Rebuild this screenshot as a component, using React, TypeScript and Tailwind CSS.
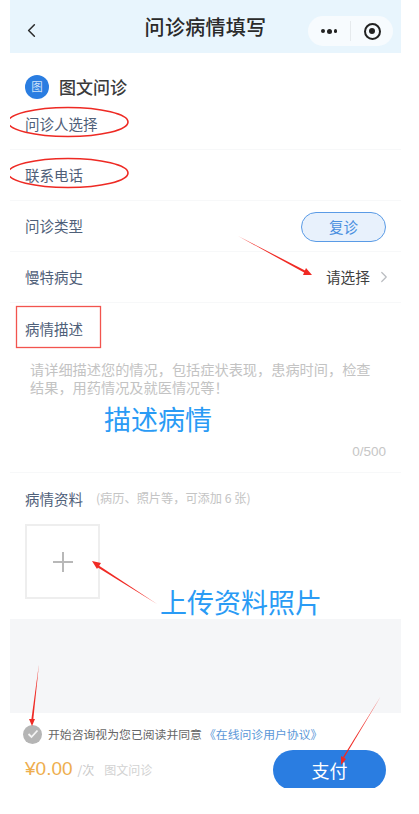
import React from 'react';
import { ChevronLeft, ChevronRight } from 'lucide-react';

const cjk = { fontFamily: '"Noto Sans CJK SC", "Noto Sans", sans-serif' };

const Row = ({ label, children, divider = true }: { label: string; children?: React.ReactNode; divider?: boolean }) => (
  <div className={`flex items-center justify-between h-[51px] pl-[15px] pr-[15px] ${divider ? 'border-b border-[#f7f8f9]' : ''}`}>
    <span className="text-[14.5px] text-[#4f6079]">{label}</span>
    {children}
  </div>
);

// red marks and arrows drawn on top of the screenshot
const Annotations = () => (
  <svg className="absolute inset-0 pointer-events-none" width="419" height="814" viewBox="0 0 419 814" fill="none">
    <defs>
      <clipPath id="page">
        <rect x="10" y="0" width="391" height="788" />
      </clipPath>
    </defs>
    <g clipPath="url(#page)">
      <ellipse cx="68" cy="122" rx="60" ry="14.5" stroke="#ee2a24" strokeWidth="1.6" />
      <ellipse cx="68" cy="173" rx="60" ry="14.5" stroke="#ee2a24" strokeWidth="1.6" />
    </g>
    <rect x="16.5" y="306.5" width="84" height="41" stroke="#f2544e" strokeWidth="1.3" />
    <polygon points="238,236 306,271 305,273" fill="#f02a24" />
    <polygon points="312,275 303,275 306,268" fill="#f02a24" />
    <polygon points="157,604 97,567 98,565" fill="#f02a24" />
    <polygon points="92,561 101,563 97,569" fill="#f02a24" />
    <polygon points="39,664 33,722 31,722" fill="#f02a24" />
    <polygon points="32,726 29,719 35,719" fill="#f02a24" />
    <polygon points="381,696 344,758 343,757" fill="#f02a24" />
    <polygon points="341,765 341,756 346,759" fill="#f02a24" />
  </svg>
);

export default function App() {
  return (
    <div className="relative w-[419px] h-[814px] bg-white overflow-hidden" style={cjk}>
      <div className="ml-[10px] w-[391px] h-[788px] flex flex-col">
        {/* Nav bar */}
        <div className="relative flex items-center justify-center h-[53px] bg-[#e8f5fd] shrink-0">
          <ChevronLeft className="absolute left-[10px] top-[19px] text-[#2b2b2b]" size={23} strokeWidth={1.6} />
          <span className="text-[20px] font-medium text-[#2a2a2a] tracking-[0.3px]">问诊病情填写</span>
          <div className="absolute right-[8px] top-[16px] w-[85px] h-[30px] rounded-full bg-[#f7fbfe] flex items-center">
            <div className="flex-1 flex items-center justify-center gap-[2px]">
              <span className="w-[3.5px] h-[3.5px] rounded-full bg-[#222]" />
              <span className="w-[5px] h-[5px] rounded-full bg-[#222]" />
              <span className="w-[3.5px] h-[3.5px] rounded-full bg-[#222]" />
            </div>
            <div className="w-px h-[20px] bg-[#e6eaed]" />
            <div className="flex-1 flex items-center justify-center">
              <div className="w-[17px] h-[17px] rounded-full border-2 border-[#222] flex items-center justify-center">
                <span className="w-[6px] h-[6px] rounded-full bg-[#222]" />
              </div>
            </div>
          </div>
        </div>

        {/* Title */}
        <div className="flex items-center gap-[10px] pl-[15px] pt-[21px] h-[47px] shrink-0">
          <span className="w-[24px] h-[24px] rounded-full bg-[#2a7de1] text-[#cfe3fa] text-[11.5px] flex items-center justify-center">图</span>
          <span className="text-[17px] font-medium text-[#3a3a3a]">图文问诊</span>
        </div>

        <div className="flex flex-col shrink-0 -mt-[1px]">
          <Row label="问诊人选择" />
          <Row label="联系电话" />
          <Row label="问诊类型">
            <span className="w-[85px] h-[30px] mt-[1px] rounded-full border border-[#5a9be6] bg-[#e8f1fc] text-[#4a8fdf] text-[14.5px] flex items-center justify-center">复诊</span>
          </Row>
          <Row label="慢特病史">
            <span className="flex items-center gap-[5px] text-[14.7px] text-[#3f3f3f]">
              请选择
              <ChevronRight className="text-[#b9bcc0] -mr-[7px]" size={18} strokeWidth={1.6} />
            </span>
          </Row>
          <Row label="病情描述" divider={false} />
        </div>

        {/* Description */}
        <div className="flex flex-col h-[119px] pl-[20px] pr-[26px] pt-[6px] border-b border-[#f7f8f9] shrink-0">
          <p className="text-[14.2px] leading-[18px] text-[#c3c3c3]">请详细描述您的情况，包括症状表现，患病时间，检查结果，用药情况及就医情况等！</p>
          <span className="mt-auto mb-[10px] -mr-[11px] self-end text-[13.5px] text-[#c6c6c6]" style={{ fontFamily: '"Liberation Sans", sans-serif' }}>0/500</span>
        </div>

        {/* Upload */}
        <div className="flex flex-col h-[146px] pl-[15px] shrink-0">
          <div className="flex items-center h-[51px] gap-[13px]">
            <span className="text-[14.5px] text-[#4f6079]">病情资料</span>
            <span className="text-[12.2px] text-[#c4c4c4]">(病历、照片等，可添加 6 张)</span>
          </div>
          <div className="w-[75px] h-[75px] border-2 border-[#eeeeee] flex items-center justify-center">
            <svg width="22" height="22" viewBox="0 0 22 22" fill="none">
              <path d="M11 1v20M1 11h20" stroke="#b8b8b8" strokeWidth="2" />
            </svg>
          </div>
        </div>

        <div className="flex-1 bg-[#f5f6f8]" />

        {/* Footer */}
        <div className="h-[75px] pl-[13px] pr-[15px] pt-[11px] shrink-0 overflow-hidden">
          <div className="flex items-center h-[20px]">
            <span className="w-[19px] h-[19px] rounded-full bg-[#b5b5b5] flex items-center justify-center shrink-0">
              <svg width="12" height="10" viewBox="0 0 12 10" fill="none">
                <path d="M1.5 5l3 3 6-6.5" stroke="#f4f4f4" strokeWidth="1.8" />
              </svg>
            </span>
            <span className="ml-[6px] text-[11.85px] text-[#666] whitespace-nowrap">开始咨询视为您已阅读并同意</span>
            <span className="ml-[2px] text-[11.85px] text-[#5b97d8] whitespace-nowrap">《在线问诊用户协议》</span>
          </div>
          <div className="flex items-start justify-between mt-[6px]">
            <div className="flex items-baseline pl-[2px] pt-[5px]">
              <span className="text-[19px] text-[#eeae4e]" style={{ fontFamily: '"Liberation Sans", sans-serif' }}>¥0.00</span>
              <span className="ml-[5px] text-[12px] text-[#c9c9c9]">/次</span>
              <span className="ml-[10px] text-[12px] text-[#d2d2d2]">图文问诊</span>
            </div>
            <span className="w-[113px] h-[40px] rounded-full bg-[#2a7de1] text-white text-[18px] flex items-center justify-center">支付</span>
          </div>
        </div>
      </div>

      <Annotations />
      <span className="absolute left-[104px] top-[400px] text-[27px] leading-[38px] text-[#2a9bf5]">描述病情</span>
      <span className="absolute left-[160px] top-[583px] text-[27px] leading-[38px] text-[#2a9bf5]">上传资料照片</span>
    </div>
  );
}
